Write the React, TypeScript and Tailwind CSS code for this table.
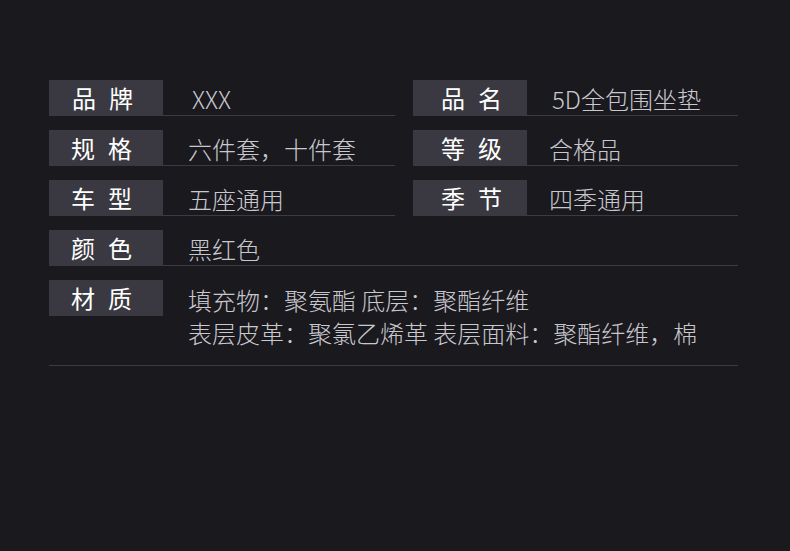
const font = { fontFamily: '"Noto Sans CJK SC", "Noto Sans", sans-serif' };

function Label({ a, b, pad }: { a: string; b: string; pad: string }) {
  return (
    <div className={`flex h-[36px] w-[114px] flex-shrink-0 items-center gap-[13px] bg-[#3a3941] text-[24px] font-normal leading-none text-white ${pad}`}>
      <span>{a}</span>
      <span>{b}</span>
    </div>
  );
}

function Cell({ a, b, value, pad, gap }: { a: string; b: string; value: string; pad: string; gap: string }) {
  return (
    <div className="flex h-[36px]">
      <Label a={a} b={b} pad={pad} />
      <div className={`flex flex-1 items-center border-b border-[#3c3b42] pt-[2px] text-[24px] font-light leading-none text-[#c9c8cf] ${gap}`}>
        {value}
      </div>
    </div>
  );
}

export default function App() {
  return (
    <div className="h-[551px] w-[790px] overflow-hidden bg-[#1a191e] pl-[49px] pt-[80px]" style={font}>
      <div className="flex w-[689px] flex-col gap-[14px]">
        <div className="grid grid-cols-[346px_325px] gap-x-[18px] gap-y-[14px]">
          <Cell a="品" b="牌" value="XXX" pad="pl-[23px]" gap="pl-[29px]" />
          <Cell a="品" b="名" value="5D全包围坐垫" pad="pl-[28px]" gap="pl-[25px]" />
          <Cell a="规" b="格" value="六件套，十件套" pad="pl-[22px]" gap="pl-[25px]" />
          <Cell a="等" b="级" value="合格品" pad="pl-[28px]" gap="pl-[22px]" />
          <Cell a="车" b="型" value="五座通用" pad="pl-[22px]" gap="pl-[25px]" />
          <Cell a="季" b="节" value="四季通用" pad="pl-[28px]" gap="pl-[22px]" />
        </div>
        <Cell a="颜" b="色" value="黑红色" pad="pl-[22px]" gap="pl-[25px]" />
        <div className="flex border-b border-[#3c3b42] pb-[16px]">
          <Label a="材" b="质" pad="pl-[22px]" />
          <div className="pl-[25px] pt-[3px] text-[24px] font-light leading-[33px] text-[#c9c8cf]">
            <div>填充物：聚氨酯 底层：聚酯纤维</div>
            <div>表层皮革：聚氯乙烯革 表层面料：聚酯纤维，棉</div>
          </div>
        </div>
      </div>
    </div>
  );
}
